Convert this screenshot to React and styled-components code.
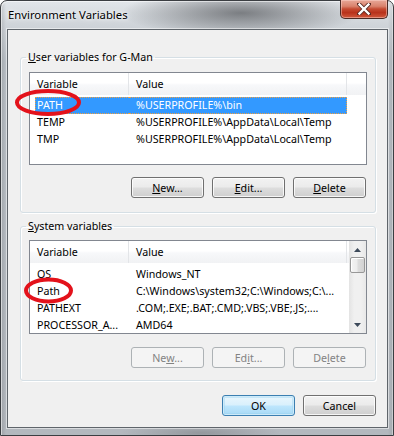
import React from 'react';
import styled, { createGlobalStyle } from 'styled-components';

const Global = createGlobalStyle`
  html, body { margin: 0; padding: 0; background: #ffffff; }
  body { font-family: "Noto Sans", "Liberation Sans", sans-serif; font-size: 10.7px; color: #000; }
  * { box-sizing: border-box; }
`;

const Window = styled.div`
  position: relative;
  width: 394px;
  height: 436px;
  display: flex;
  flex-direction: column;
  padding: 0 5px 7px 6px;
  border: 1px solid #3b3e42;
  border-radius: 7px 7px 0 0;
  background:
    radial-gradient(ellipse 120px 24px at 240px 12px, rgba(60, 62, 66, 0.6), rgba(60, 62, 66, 0) 100%),
    radial-gradient(ellipse 80px 10px at 200px 432px, rgba(90, 92, 96, 0.35), rgba(90, 92, 96, 0) 100%),
    linear-gradient(90deg, rgba(0, 0, 0, 0.12) 0px, rgba(0, 0, 0, 0) 5px, rgba(0, 0, 0, 0) 387px, rgba(0, 0, 0, 0.12) 394px),
    linear-gradient(180deg, #e2e6ea 0px, #cfd4d9 24px, #b9bfc5 60px, #b3b8be 100%);
  box-shadow: inset 1px 1px 0 rgba(255, 255, 255, 0.55), inset -1px 0 0 rgba(255, 255, 255, 0.4);
`;

const TitleBar = styled.div`
  height: 28px;
  flex: none;
  display: flex;
  justify-content: space-between;
  align-items: flex-start;
`;

const Title = styled.div`
  padding: 6px 0 0 1px;
  font-size: 11.3px;
  color: #000;
  text-shadow: 0 0 6px rgba(255, 255, 255, 0.9), 0 0 3px rgba(255, 255, 255, 0.9);
`;

const CloseButton = styled.div`
  width: 48px;
  height: 19px;
  margin-top: -1px;
  display: flex;
  align-items: center;
  justify-content: center;
  border: 1px solid #4a2a25;
  border-top: none;
  border-radius: 0 0 5px 5px;
  background: linear-gradient(180deg, #e8a898 0%, #d9826c 35%, #c54a31 50%, #b8321b 70%, #d0583c 100%);
  box-shadow: inset 0 0 0 1px rgba(255, 220, 210, 0.45);
`;

const Client = styled.div`
  flex: 1;
  display: flex;
  flex-direction: column;
  background: #f0f0f0;
  border: 1px solid #5f656b;
  padding: 19px 11px 11px 12px;
  box-shadow: 0 0 0 1px rgba(255, 255, 255, 0.5);
`;

const Group = styled.fieldset`
  margin: ${(p) => p.$mt || 0}px 0 0 0;
  padding: ${(p) => p.$pt}px 8px ${(p) => p.$pb}px 8px;
  border: 1px solid #d5dfe5;
  border-radius: 3px;
  box-shadow: 1px 1px 0 #ffffff, inset 1px 1px 0 #ffffff;
  min-width: 0;
`;

const Legend = styled.legend`
  margin-left: -3px;
  padding: 0 2px;
  height: 16px;
  line-height: 16px;
  color: #000;
`;

const U = styled.span`
  text-decoration: underline;
  text-underline-offset: 1px;
`;

const List = styled.div`
  height: ${(p) => p.$h}px;
  border: 1px solid #828790;
  background: #ffffff;
  display: flex;
  overflow: hidden;
`;

const ListMain = styled.div`
  flex: 1;
  display: flex;
  flex-direction: column;
  min-width: 0;
`;

const Header = styled.div`
  height: 22px;
  flex: none;
  display: grid;
  grid-template-columns: 99px ${(p) => p.$vw}px 1fr;
  background: linear-gradient(180deg, #ffffff 0%, #ffffff 45%, #f7f8fa 55%, #f1f2f4 100%);
`;

const HeaderCell = styled.div`
  display: flex;
  align-items: center;
  padding-left: 7px;
  border-right: 1px solid #e3e5e8;
  color: #000;
`;

const HeaderFill = styled.div``;

const Rows = styled.div`
  flex: 1;
  overflow: hidden;
  margin-top: ${(p) => p.$gap}px;
`;

const RowsInner = styled.div`
  margin-top: ${(p) => p.$shift}px;
`;

const Row = styled.div`
  height: 17px;
  display: grid;
  grid-template-columns: 99px ${(p) => p.$vw}px;
  align-items: center;
  white-space: nowrap;
`;

const Cell = styled.div`
  overflow: hidden;
  padding-left: ${(p) => p.$pl}px;
  height: 17px;
  line-height: 16px;
  ${(p) =>
    p.$sel &&
    `
    background: #3399ff;
    color: #ffffff;
    border-top: 1px dotted #f0a040;
    border-bottom: 1px dotted #f0a040;
    line-height: 14px;
  `}
  ${(p) => p.$first && p.$sel && `border-left: 1px dotted #f0a040; margin-left: 5px; padding-left: 1px;`}
  ${(p) => p.$last && p.$sel && `border-right: 1px dotted #f0a040;`}
`;

const Scrollbar = styled.div`
  width: 17px;
  flex: none;
  display: flex;
  flex-direction: column;
  align-items: center;
  background: linear-gradient(90deg, #e3e3e3 0%, #f0f0f0 30%, #f0f0f0 70%, #e8e8e8 100%);
`;

const ArrowBox = styled.div`
  height: 17px;
  width: 17px;
  display: flex;
  align-items: center;
  justify-content: center;
`;

const Thumb = styled.div`
  width: 15px;
  height: 16px;
  margin-top: ${(p) => p.$top}px;
  border: 1px solid #979797;
  border-radius: 2px;
  background: linear-gradient(90deg, #f4f4f4 0%, #ececec 45%, #dcdcdc 55%, #d2d2d2 100%);
  box-shadow: inset 1px 1px 0 #ffffff;
`;

const Track = styled.div`
  flex: 1;
`;

const ButtonRow = styled.div`
  display: flex;
  justify-content: flex-end;
  gap: ${(p) => p.$gap || 8}px;
  margin-top: ${(p) => p.$mt}px;
  padding-right: ${(p) => p.$pr || 0}px;
`;

const Button = styled.div`
  width: 73px;
  height: 21px;
  display: flex;
  align-items: center;
  justify-content: center;
  border-radius: 3px;
  border: 1px solid ${(p) => (p.$disabled ? '#adb2b5' : p.$default ? '#3c7fb1' : '#707070')};
  color: ${(p) => (p.$disabled ? '#838383' : '#000')};
  background: ${(p) =>
    p.$disabled
      ? '#f4f4f4'
      : p.$default
      ? 'linear-gradient(180deg, #eaf6fd 0%, #d9f0fc 48%, #bee6fd 52%, #a7d9f5 100%)'
      : 'linear-gradient(180deg, #f2f2f2 0%, #ebebeb 48%, #dddddd 52%, #cfcfcf 100%)'};
  box-shadow: ${(p) =>
    p.$disabled
      ? 'none'
      : p.$default
      ? 'inset 0 0 0 1px #cdeaf9, inset 0 0 0 2px rgba(150, 210, 240, 0.4)'
      : 'inset 0 0 0 1px rgba(255, 255, 255, 0.8)'};
`;

const Overlay = styled.svg`
  position: absolute;
  left: -1px;
  top: -1px;
  pointer-events: none;
`;

const Tri = ({ up }) => (
  <svg width="7" height="4" viewBox="0 0 7 4">
    <path d={up ? 'M0 4 L3.5 0 L7 4 Z' : 'M0 0 L3.5 4 L7 0 Z'} fill="#3d4a5a" />
  </svg>
);

const CloseX = () => (
  <svg width="14" height="12" viewBox="0 0 14 12">
    <path
      d="M2 1 L12 11 M12 1 L2 11"
      stroke="#5a2a22"
      strokeWidth="4"
      strokeLinecap="square"
      fill="none"
    />
    <path
      d="M2.5 1.5 L11.5 10.5 M11.5 1.5 L2.5 10.5"
      stroke="#ffffff"
      strokeWidth="2.4"
      strokeLinecap="square"
      fill="none"
    />
  </svg>
);

const userRows = [
  { name: 'PATH', value: '%USERPROFILE%\\bin', sel: true },
  { name: 'TEMP', value: '%USERPROFILE%\\AppData\\Local\\Temp' },
  { name: 'TMP', value: '%USERPROFILE%\\AppData\\Local\\Temp' },
];

const sysRows = [
  { name: 'OS', value: 'Windows_NT' },
  { name: 'Path', value: 'C:\\Windows\\system32;C:\\Windows;C:\\...' },
  { name: 'PATHEXT', value: '.COM;.EXE;.BAT;.CMD;.VBS;.VBE;.JS;....' },
  { name: 'PROCESSOR_A...', value: 'AMD64' },
];

function VarList({ rows, height, valueWidth, scroll, rowsGap, rowsShift }) {
  return (
    <List $h={height}>
      <ListMain>
        <Header $vw={valueWidth}>
          <HeaderCell>Variable</HeaderCell>
          <HeaderCell>Value</HeaderCell>
          <HeaderFill />
        </Header>
        <Rows $gap={rowsGap}>
          <RowsInner $shift={rowsShift}>
            {rows.map((r) => (
              <Row key={r.name} $vw={valueWidth}>
                <Cell $pl={7} $sel={r.sel} $first>
                  {r.name}
                </Cell>
                <Cell $pl={7} $sel={r.sel} $last>
                  {r.value}
                </Cell>
              </Row>
            ))}
          </RowsInner>
        </Rows>
      </ListMain>
      {scroll && (
        <Scrollbar>
          <ArrowBox>
            <Tri up />
          </ArrowBox>
          <Thumb $top={-1} />
          <Track />
          <ArrowBox>
            <Tri />
          </ArrowBox>
        </Scrollbar>
      )}
    </List>
  );
}

export default function App() {
  return (
    <>
      <Global />
      <Window>
        <TitleBar>
          <Title>Environment Variables</Title>
          <CloseButton>
            <CloseX />
          </CloseButton>
        </TitleBar>
        <Client>
          <Group $pt={7} $pb={14}>
            <Legend>
              <U>U</U>ser variables for G-Man
            </Legend>
            <VarList rows={userRows} height={93} valueWidth={218} rowsGap={2} rowsShift={0} />
            <ButtonRow $mt={12} $pr={1}>
              <Button>
                <span>
                  <U>N</U>ew...
                </span>
              </Button>
              <Button>
                <span>
                  <U>E</U>dit...
                </span>
              </Button>
              <Button>
                <span>
                  <U>D</U>elete
                </span>
              </Button>
            </ButtonRow>
          </Group>
          <Group $mt={5} $pt={6} $pb={12}>
            <Legend>
              <U>S</U>ystem variables
            </Legend>
            <VarList rows={sysRows} height={94} valueWidth={218} scroll rowsGap={7} rowsShift={-4} />
            <ButtonRow $mt={13} $pr={1}>
              <Button $disabled>
                <span>
                  Ne<U>w</U>...
                </span>
              </Button>
              <Button $disabled>
                <span>
                  Ed<U>i</U>t...
                </span>
              </Button>
              <Button $disabled>
                <span>
                  De<U>l</U>ete
                </span>
              </Button>
            </ButtonRow>
          </Group>
          <ButtonRow $mt={14} $gap={8}>
            <Button $default>OK</Button>
            <Button>Cancel</Button>
          </ButtonRow>
        </Client>
        <Overlay width="394" height="436" viewBox="0 0 394 436">
          <ellipse cx="48" cy="102.5" rx="31" ry="11.5" fill="none" stroke="#e3121b" strokeWidth="4" />
          <ellipse cx="48.5" cy="290.5" rx="22.5" ry="11" fill="none" stroke="#e3121b" strokeWidth="4" />
        </Overlay>
      </Window>
    </>
  );
}
